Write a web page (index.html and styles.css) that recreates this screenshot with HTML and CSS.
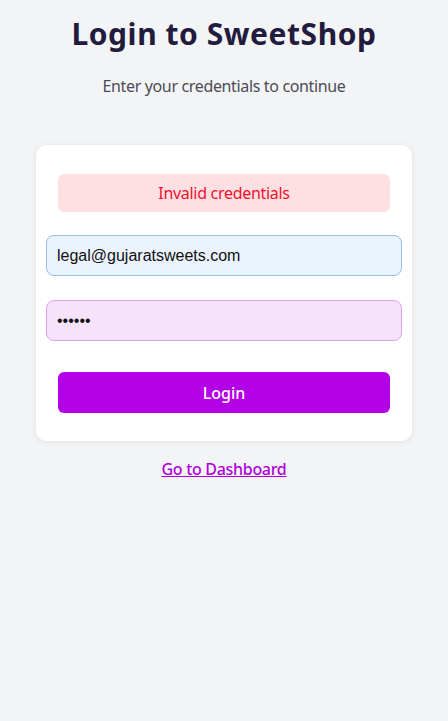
FILE: index.html
```html
<!DOCTYPE html>
<html lang="en">
<head>
<meta charset="utf-8">
<title>Login to SweetShop</title>
<link rel="stylesheet" href="styles.css">
</head>
<body>
<main class="page">
  <h1 class="title">Login to SweetShop</h1>
  <p class="subtitle">Enter your credentials to continue</p>
  <form class="card">
    <div class="error">Invalid credentials</div>
    <input class="field field-email" type="email" value="legal@gujaratsweets.com">
    <input class="field field-pass" type="password" value="secret">
    <button class="btn" type="button">Login</button>
  </form>
  <a class="link" href="#">Go to Dashboard</a>
</main>
</body>
</html>
```

FILE: styles.css
```css
html, body {
  margin: 0;
  padding: 0;
  background: #f3f4f6;
}
body {
  font-family: "Noto Sans", "Open Sans", sans-serif;
  min-height: 721px;
}
.page {
  display: flex;
  flex-direction: column;
  align-items: center;
  padding-top: 16px;
}
.title {
  margin: 0;
  font-size: 30px;
  line-height: 36px;
  font-weight: 700;
  letter-spacing: 0.55px;
  color: #231b3d;
}
.subtitle {
  margin: 22px 0 0;
  font-size: 16px;
  line-height: 24px;
  letter-spacing: -0.35px;
  color: #4b4b57;
}
.card {
  box-sizing: border-box;
  width: 376px;
  margin-top: 47px;
  background: #fff;
  border-radius: 10px;
  box-shadow: 0 1px 6px rgba(0,0,0,0.08), 0 0 1px rgba(0,0,0,0.06);
  padding: 29px 10px 28px;
  display: flex;
  flex-direction: column;
}
.error {
  margin: 0 12px;
  height: 38px;
  border-radius: 6px;
  background: #fee0e2;
  color: #f5112e;
  font-size: 16px;
  letter-spacing: -0.3px;
  display: flex;
  align-items: center;
  justify-content: center;
}
.field {
  box-sizing: border-box;
  height: 41px;
  width: 100%;
  border-radius: 8px;
  padding: 0 10px;
  font-family: "Liberation Sans", Arial, sans-serif;
  font-size: 16px;
  color: #111;
  outline: none;
}
.field-email {
  margin-top: 23px;
  background: #ebf3ff;
  border: 1px solid #93bdf3;
}
.field-pass {
  margin-top: 24px;
  background: #f6e2fc;
  border: 1px solid #d7a2f6;
}
.btn {
  margin: 31px 12px 0;
  height: 41px;
  border: 0;
  border-radius: 6px;
  background: #b300e6;
  color: #fff;
  font-family: "Noto Sans", "Open Sans", sans-serif;
  font-size: 16px;
  font-weight: 500;
  cursor: pointer;
}
.link {
  margin-top: 16px;
  font-size: 16px;
  line-height: 24px;
  font-weight: 500;
  letter-spacing: -0.3px;
  color: #b000dd;
  text-decoration: underline;
}
```
